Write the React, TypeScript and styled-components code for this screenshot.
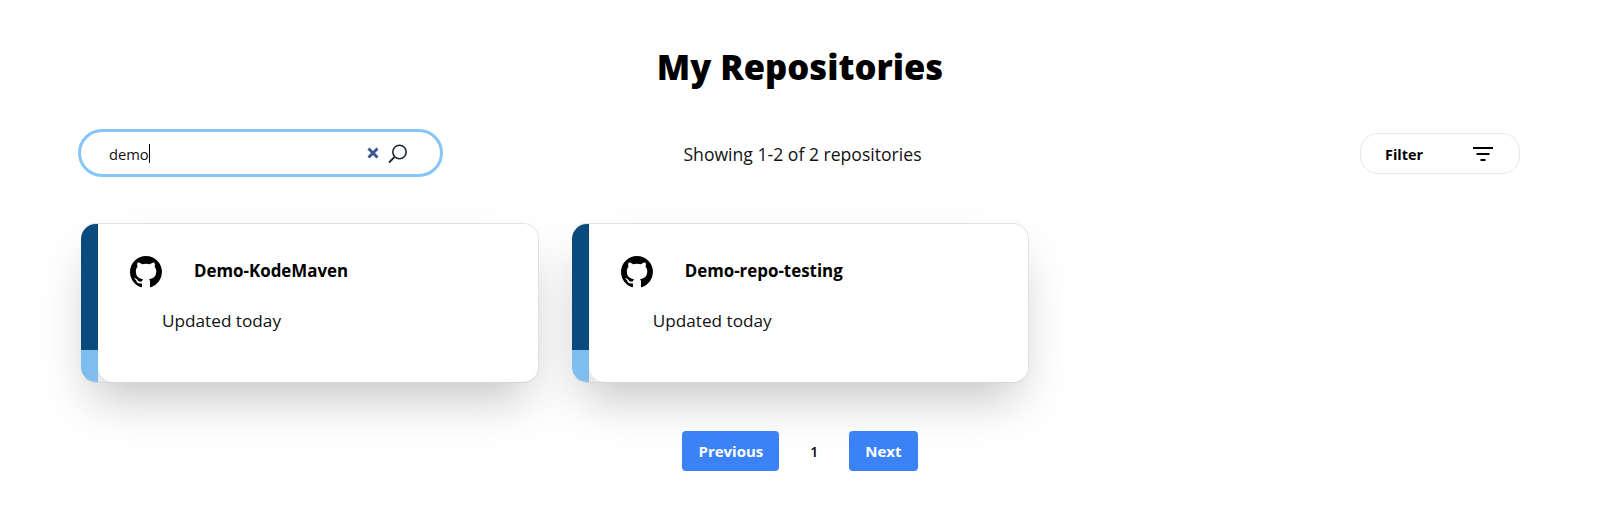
import styled, { createGlobalStyle } from "styled-components";
import { BsGithub } from "react-icons/bs";

const GlobalStyle = createGlobalStyle`
  * {
    box-sizing: border-box;
  }

  body {
    margin: 0;
    background: #fff;
    color: #000;
    font-family: "Open Sans", "Noto Sans", sans-serif;
  }
`;

const repos = [
  { name: "Demo-KodeMaven", updated: "Updated today" },
  { name: "Demo-repo-testing", updated: "Updated today" },
];

function CloseIcon() {
  return (
    <svg width="12" height="12" viewBox="0 0 12 12">
      <path d="M1.500 1.500l9 9M10.500 1.500l-9 9" stroke="#3d5a94" strokeWidth="3" fill="none" />
    </svg>
  );
}

function SearchIcon() {
  return (
    <svg width="21" height="21" viewBox="0 0 21 21" fill="none">
      <circle cx="12.500" cy="9" r="6.700" stroke="#1f2933" strokeWidth="1.600" />
      <path d="M7.500 14l-5.500 5.500" stroke="#1f2933" strokeWidth="1.800" />
    </svg>
  );
}

function FilterIcon() {
  return (
    <svg width="20" height="14" viewBox="0 0 20 14">
      <path d="M0 1h20M3.500 7h13M7.500 13h5" stroke="#000" strokeWidth="1.800" fill="none" />
    </svg>
  );
}

export default function App() {
  return (
    <Page>
      <GlobalStyle />
      <Title>My Repositories</Title>
      <Toolbar>
        <SearchBox>
          <SearchText>
            demo
            <Caret />
          </SearchText>
          <SearchActions>
            <CloseIcon />
            <SearchIcon />
          </SearchActions>
        </SearchBox>
        <Count>Showing 1-2 of 2 repositories</Count>
        <FilterSlot>
          <FilterButton>
            <FilterLabel>Filter</FilterLabel>
            <FilterIcon />
          </FilterButton>
        </FilterSlot>
      </Toolbar>
      <CardGrid>
        {repos.map((repo) => (
          <Card key={repo.name}>
            <Accent />
            <CardBody>
              <CardHead>
                <BsGithub size={32} />
                <RepoName>{repo.name}</RepoName>
              </CardHead>
              <Updated>{repo.updated}</Updated>
            </CardBody>
          </Card>
        ))}
      </CardGrid>
      <Pagination>
        <PageButton>Previous</PageButton>
        <PageNumber>1</PageNumber>
        <PageButton>Next</PageButton>
      </Pagination>
    </Page>
  );
}

const Page = styled.div`
  height: 519px;
  padding: 43px 80px 0;
  overflow: hidden;
`;

const Title = styled.h1`
  margin: 0;
  height: 48px;
  line-height: 48px;
  text-align: center;
  font-size: 34.6px;
  font-weight: 800;
`;

const Toolbar = styled.div`
  display: grid;
  grid-template-columns: 1fr 1fr 1fr;
  align-items: center;
  margin: 38px 0 0 -2px;
  height: 48px;
`;

const SearchBox = styled.div`
  display: flex;
  align-items: center;
  justify-content: space-between;
  width: 365px;
  height: 48px;
  padding: 0 32px 0 28px;
  border: 3px solid #85c5f7;
  border-radius: 24px;
`;

const SearchText = styled.div`
  display: flex;
  align-items: center;
  margin-top: 1px;
  font-size: 14.7px;
  color: #111;
`;

const Caret = styled.span`
  width: 1px;
  height: 19px;
  background: #000;
`;

const SearchActions = styled.div`
  display: flex;
  align-items: center;
  gap: 8px;
`;

const Count = styled.div`
  margin: 2px 0 0 7px;
  text-align: center;
  font-size: 17.6px;
  color: #111;
`;

const FilterSlot = styled.div`
  display: flex;
  justify-content: flex-end;
`;

const FilterButton = styled.div`
  display: flex;
  align-items: center;
  justify-content: space-between;
  width: 160px;
  height: 41px;
  margin-top: 1px;
  padding: 0 26px 0 24px;
  border: 1px solid #e5e7eb;
  border-radius: 18px;
  font-size: 14.4px;
  font-weight: 700;
`;

const FilterLabel = styled.span`
  margin-top: 1px;
`;

const CardGrid = styled.div`
  display: grid;
  grid-template-columns: repeat(3, 1fr);
  gap: 32px;
  margin-top: 46px;
`;

const Card = styled.div`
  display: flex;
  height: 160px;
  border: 1px solid #e2e2e2;
  border-left-color: transparent;
  border-bottom-color: #d6d6d6;
  border-radius: 16px;
  background: #e9e9e9;
  background-clip: padding-box;
  box-shadow: 0 25px 50px -12px rgba(0, 0, 0, 0.25);
  overflow: hidden;
`;

const Accent = styled.div`
  flex: 0 0 17px;
  background: linear-gradient(#0b4a7d 0, #0b4a7d 126px, #7fbdee 126px);
`;

const CardBody = styled.div`
  flex: 1;
  padding: 32px 32px 0;
  background: #fff;
  border-radius: 0 0 0 16px;
`;

const CardHead = styled.div`
  display: flex;
  align-items: center;
  gap: 32px;
`;

const RepoName = styled.div`
  margin-top: -4px;
  font-size: 16.9px;
  font-weight: 700;
`;

const Updated = styled.div`
  margin: 21px 0 0 32px;
  font-size: 17.2px;
  color: #111;
`;

const Pagination = styled.div`
  display: flex;
  justify-content: center;
  align-items: center;
  margin-top: 48px;
`;

const PageButton = styled.div`
  display: flex;
  align-items: center;
  height: 40px;
  padding: 0 16px;
  border-radius: 4px;
  background: #3b82f6;
  color: #fff;
  font-size: 15px;
  font-weight: 700;
`;

const PageNumber = styled.div`
  width: 70px;
  text-align: center;
  font-size: 14px;
  font-weight: 600;
`;
